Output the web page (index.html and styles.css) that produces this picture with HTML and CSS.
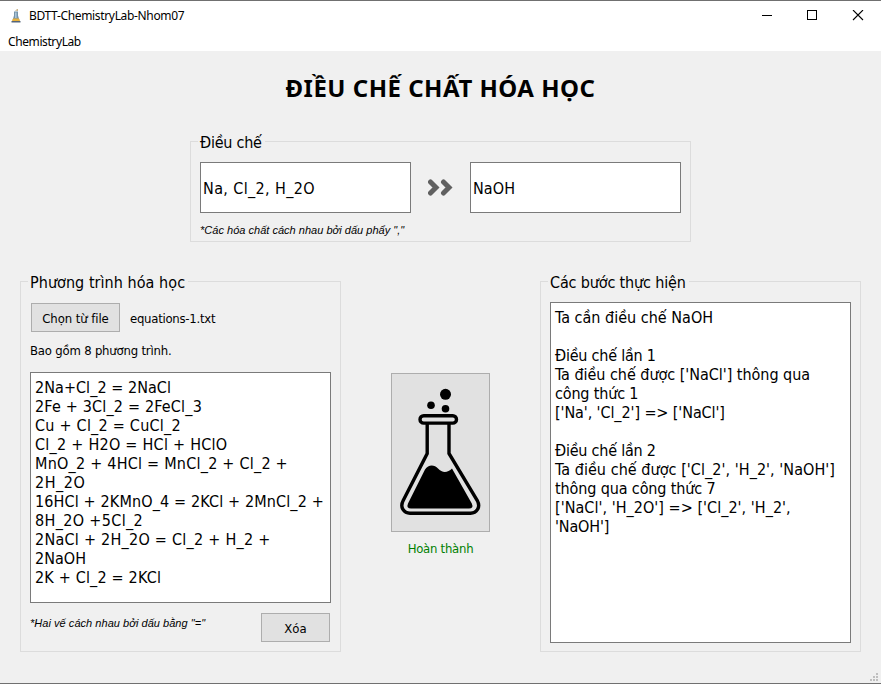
FILE: index.html
```html
<!DOCTYPE html>
<html lang="vi">
<head>
<meta charset="utf-8">
<title>BDTT-ChemistryLab-Nhom07</title>
<link rel="stylesheet" href="styles.css">
</head>
<body>
<div class="window">
  <header class="titlebar">
    <svg class="app-icon" width="10" height="14" viewBox="0 0 10 14">
      <path d="M4 1.500h1.500V0H7v2H4z" fill="#c9b48a"/>
      <path d="M3 2.500h4v4l1.500 5H1.500l1.500-5z" fill="#7793a8"/>
      <path d="M4.200 3.500h1.300v5.500H4.200z" fill="#b5d3e6"/>
      <path d="M2 9.500h6l1 2.500H1z" fill="#e9b23c"/>
      <path d="M.500 12h9v1.500h-9z" fill="#55657a"/>
    </svg>
    <span class="app-title">BDTT-ChemistryLab-Nhom07</span>
    <svg class="controls" width="104" height="12" viewBox="0 0 104 12" shape-rendering="crispEdges">
      <path d="M1 5.500h10M46.500 .500h9v9h-9z" fill="none" stroke="#000"/>
      <path d="M92 0l10 10M102 0l-10 10" fill="none" stroke="#000" stroke-width="1.100" shape-rendering="auto"/>
    </svg>
  </header>
  <nav class="menubar">ChemistryLab</nav>
  <main>
    <h1>ĐIỀU CHẾ CHẤT HÓA HỌC</h1>
    <section class="group prepare">
      <h2 class="t-prep">Điều chế</h2>
      <div class="fields">
        <div class="field f-in">Na, Cl_2, H_2O</div>
        <svg width="26" height="18" viewBox="0 0 26 18">
          <path d="M2.500 3l5.500 5.500-5.500 5.500M15.500 3l5.500 5.500-5.500 5.500" fill="none" stroke="#606060" stroke-width="5" stroke-linecap="round"/>
        </svg>
        <div class="field f-out">NaOH</div>
      </div>
      <p class="note n1">*Các hóa chất cách nhau bởi dấu phẩy ","</p>
    </section>
    <div class="columns">
      <section class="group side">
        <h2 class="t-eq">Phương trình hóa học</h2>
        <div class="file-row">
          <div class="button choose">Chọn từ file</div>
          <span class="filename">equations-1.txt</span>
        </div>
        <p class="count">Bao gồm 8 phương trình.</p>
        <div class="textbox equations">
          <div class="e1">2Na+Cl_2 = 2NaCl</div>
          <div class="e2">2Fe + 3Cl_2 = 2FeCl_3</div>
          <div class="e3">Cu + Cl_2 = CuCl_2</div>
          <div class="e4">Cl_2 + H2O = HCl + HClO</div>
          <div class="e5">MnO_2 + 4HCl = MnCl_2 + Cl_2 +</div>
          <div class="e6">2H_2O</div>
          <div class="e7">16HCl + 2KMnO_4 = 2KCl + 2MnCl_2 +</div>
          <div class="e8">8H_2O +5Cl_2</div>
          <div class="e9">2NaCl + 2H_2O = Cl_2 + H_2 +</div>
          <div class="e10">2NaOH</div>
          <div class="e11">2K + Cl_2 = 2KCl</div>
        </div>
        <div class="foot">
          <p class="note n2">*Hai vế cách nhau bởi dấu bằng "="</p>
          <div class="button clear">Xóa</div>
        </div>
      </section>
      <div class="center">
        <div class="button run">
          <svg width="97" height="157" viewBox="0 0 97 157">
            <circle cx="53.500" cy="20.300" r="5.500"/>
            <circle cx="39" cy="31.200" r="3.800"/>
            <circle cx="53.500" cy="34.700" r="3.800"/>
            <rect x="28" y="41.700" width="36.500" height="7.400" rx="3.700" fill="none" stroke="#000" stroke-width="3.400"/>
            <path d="M35.200 50v29.500L11.200 126.500C7.500 133.500 12 139.200 18 139.200h60.500c6 0 10.500-5.700 6.800-12.700L57 79.500V50" fill="none" stroke="#000" stroke-width="3.400"/>
            <path d="M33 95.500C36.500 90 42.500 90.500 46 94.500C50.500 99.500 56 98.500 60 94.500L79.800 129.500Q82 134.500 77 134.500H19Q14 134.500 16 129.500z"/>
          </svg>
        </div>
        <p class="status">Hoàn thành</p>
      </div>
      <section class="group side">
        <h2 class="t-steps">Các bước thực hiện</h2>
        <div class="textbox steps">
          <div class="s1">Ta cần điều chế NaOH</div>
          <br>
          <div class="s2">Điều chế lần 1</div>
          <div class="s3">Ta điều chế được ['NaCl'] thông qua</div>
          <div class="s4">công thức 1</div>
          <div class="s5">['Na', 'Cl_2'] =&gt; ['NaCl']</div>
          <br>
          <div class="s2">Điều chế lần 2</div>
          <div class="s7">Ta điều chế được ['Cl_2', 'H_2', 'NaOH']</div>
          <div class="s8">thông qua công thức 7</div>
          <div class="s9">['NaCl', 'H_2O'] =&gt; ['Cl_2', 'H_2',</div>
          <div class="s10">'NaOH']</div>
        </div>
      </section>
    </div>
    <svg class="grip" width="8" height="8" viewBox="0 0 8 8" fill="#bfbfbf">
      <path d="M6 0h2v2H6zM3 3h2v2H3zM6 3h2v2H6zM0 6h2v2H0zM3 6h2v2H3zM6 6h2v2H6z"/>
    </svg>
  </main>
</div>
</body>
</html>
```
FILE: styles.css
```css
* { box-sizing: border-box; }
body { margin: 0; color: #000; font: 16px/19px "DejaVu Sans Condensed", "Noto Sans", sans-serif; }
h1, h2, p { margin: 0; font-weight: normal; white-space: nowrap; }
svg { display: block; flex: none; }
.window { width: 881px; height: 684px; display: flex; flex-direction: column; background: #fff; border-top: 1px solid #707070; border-bottom: 1px solid #707070; overflow: hidden; }
.titlebar { height: 30px; display: flex; align-items: center; padding: 0 16px 0 11px; font: 12px/16px "Noto Sans", sans-serif; }
.app-title { margin-left: 8px; letter-spacing: -.34px; }
.controls { margin-left: auto; }
.menubar { height: 20px; padding: 1px 0 0 8px; font: 12px/20px "Noto Sans", sans-serif; letter-spacing: -.4px; }
main { position: relative; flex: 1; background: #f0f0f0; display: flex; flex-direction: column; align-items: center; }
h1 { height: 32px; margin-top: 21px; font: bold 24px/32px "Noto Sans", sans-serif; letter-spacing: .504px; }

.group { border: 1px solid #dcdcdc; padding: 0 9px; }
.group h2 { width: max-content; height: 20px; margin: -9px 0 0 -2px; padding: 0 3px 0 2px; font-size: 16px; line-height: 20px; background: #f0f0f0; }
.prepare { width: 501px; height: 101px; margin-top: 37px; }
.fields { display: flex; align-items: center; justify-content: space-between; margin-top: 9px; }
.field { width: 211px; height: 51px; padding: 1px 0 0 2px; border: 1px solid #7a7a7a; background: #fff; line-height: 50px; }
.note { font: italic 11px/14px "Liberation Sans", sans-serif; }
.n1 { margin-top: 10px; letter-spacing: .02px; }

.columns { width: 100%; display: flex; justify-content: space-between; padding: 0 20px; margin-top: 39px; }
.side { width: 321px; height: 371px; }
.button { display: flex; align-items: center; justify-content: center; border: 1px solid #adadad; background: #e1e1e1; font-size: 13px; }
.file-row { display: flex; align-items: center; margin: 10px 0 0 1px; font-size: 13px; }
.choose { width: 89px; height: 29px; padding-top: 1px; letter-spacing: -.08px; }
.filename { margin-left: 10px; padding-top: 1px; letter-spacing: -.26px; }
.count { height: 19px; margin-top: 9px; font-size: 13px; letter-spacing: -.2px; }
.textbox { width: 301px; padding: 5px 4px; border: 1px solid #7a7a7a; background: #fff; white-space: nowrap; }
.equations { height: 231px; margin-top: 12px; }
.steps { height: 341px; margin-top: 9px; }
.foot { display: flex; justify-content: space-between; padding-right: 1px; margin-top: 10px; }
.n2 { margin-top: 3px; letter-spacing: .04px; }
.clear { width: 69px; height: 29px; padding-top: 1px; letter-spacing: .1px; }
.center { display: flex; flex-direction: column; align-items: center; padding-top: 92px; }
.run { width: 99px; height: 159px; }
.status { margin-top: 7px; color: #008000; font-size: 13px; letter-spacing: -.26px; }
.grip { position: absolute; right: 3px; bottom: 2px; }

/* Per-line tracking */
.t-prep { letter-spacing: -.25px; }
.t-eq { letter-spacing: .05px; }
.t-steps { letter-spacing: -.15px; }
.f-in { letter-spacing: .37px; }
.f-out { letter-spacing: .1px; }
.e1 { letter-spacing: .05px; }
.e2 { letter-spacing: .18px; }
.e3 { letter-spacing: .24px; }
.e4 { letter-spacing: .26px; }
.e5 { letter-spacing: .235px; }
.e6 { letter-spacing: .55px; }
.e7 { letter-spacing: .14px; }
.e8 { letter-spacing: .35px; }
.e9 { letter-spacing: .26px; }
.e10 { letter-spacing: .02px; }
.e11 { letter-spacing: .18px; }
.s1 { letter-spacing: .01px; }
.s2 { letter-spacing: -.22px; }
.s3 { letter-spacing: -.03px; }
.s4 { letter-spacing: -.16px; }
.s5 { letter-spacing: -.09px; }
.s7 { letter-spacing: .055px; }
.s8 { letter-spacing: -.12px; }
.s9 { letter-spacing: .04px; }
.s10 { letter-spacing: -.16px; }
```
